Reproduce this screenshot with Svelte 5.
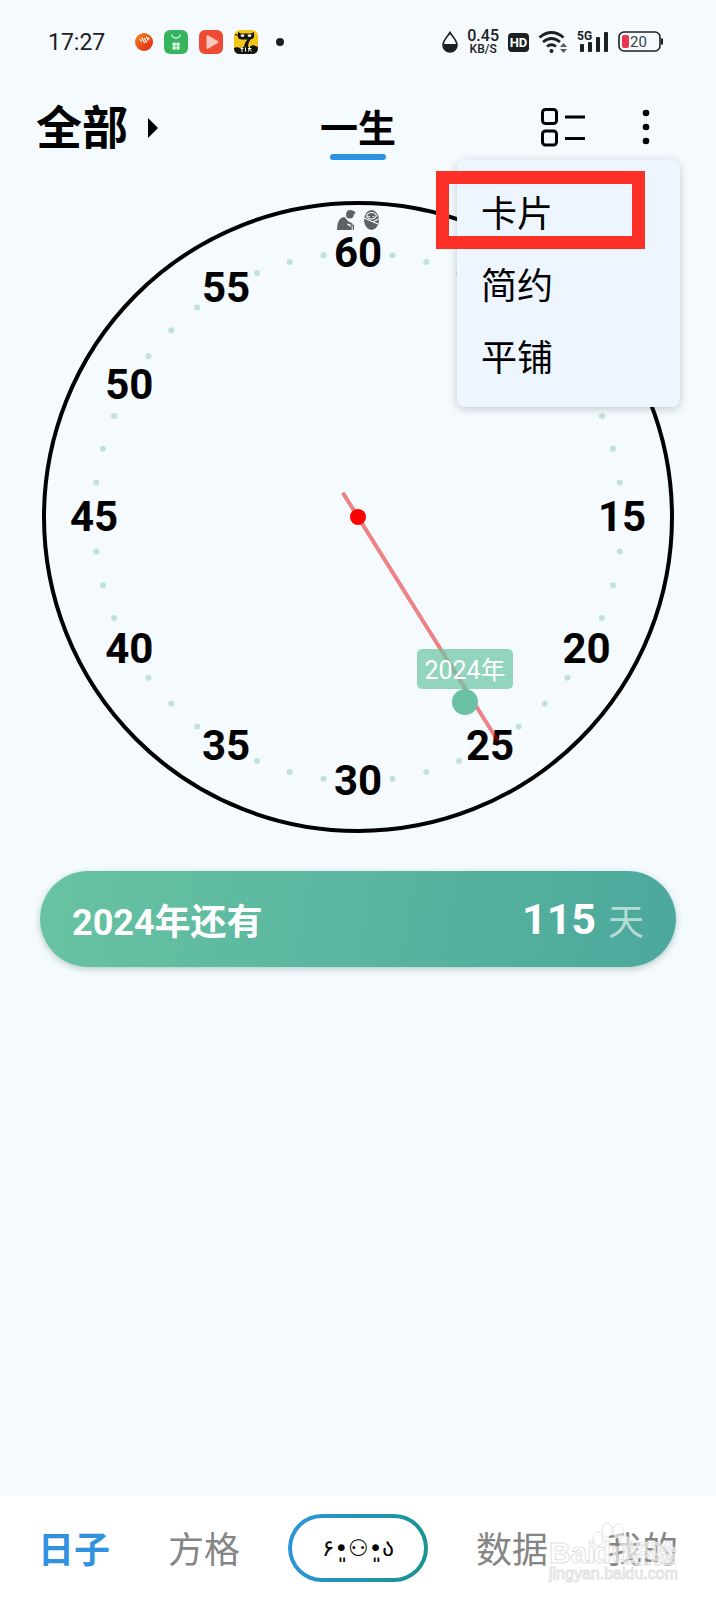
<script lang="ts">
  const CENTER = 316;
  const RING = 264;

  // angle in degrees, 0 points up, clockwise
  function polar(angle: number, radius: number) {
    const rad = (angle * Math.PI) / 180;
    return {
      x: CENTER + radius * Math.sin(rad),
      y: CENTER - radius * Math.cos(rad),
    };
  }

  const numbers = Array.from({ length: 12 }, (_, i) => ({
    label: (i + 1) * 5,
    ...polar((i + 1) * 30, RING),
  }));
  const dots = Array.from({ length: 48 }, (_, i) => i)
    .filter((i) => i % 4 !== 0)
    .map((i) => polar(i * 7.5, RING));

  const handTail = polar(328, 27);
  const handTip = polar(148, 262);

  const views = ['卡片', '简约', '平铺'];
  let selectedView = $state('卡片');
  let menuOpen = $state(true);

  const leftTabs = ['日子', '方格'];
  const rightTabs = ['数据', '我的'];
  let selectedTab = $state('日子');

  function pickView(view: string) {
    selectedView = view;
    menuOpen = false;
  }
</script>

{#snippet tabButton(tab: string)}
  <button
    class="tab"
    data-selected={selectedTab === tab}
    onclick={() => (selectedTab = tab)}
  >
    {tab}
  </button>
{/snippet}

<div class="screen">
  <div class="status-bar">
    <div class="status-left">
      <span class="time">17:27</span>
      <div class="apps">
        <svg width="18" height="18" viewBox="0 0 18 18">
          <defs>
            <linearGradient id="orange" x1="0" y1="0" x2="1" y2="1">
              <stop offset="0" stop-color="#f58a1c" />
              <stop offset="1" stop-color="#dd1f16" />
            </linearGradient>
          </defs>
          <circle cx="9" cy="9" r="9" fill="url(#orange)" />
          <path
            d="M5 6.500l1.500 2M7 5l2.500 4.500M9.500 5.500l2 3.500M11.500 4l1.500 3M13.500 5l.5 1"
            fill="none"
            stroke="#fff"
            stroke-width="1.200"
            stroke-linecap="round"
          />
        </svg>
        <svg width="24" height="24" viewBox="0 0 24 24">
          <rect width="24" height="24" rx="6" fill="#35b35d" />
          <path d="M8 4.500a4 3.600 0 0 0 8 0" fill="none" stroke="#d5f3dd" stroke-width="1.500" />
          <g fill="#d5f3dd">
            <circle cx="10.200" cy="14.200" r="1.900" />
            <circle cx="14" cy="14.200" r="1.900" />
            <circle cx="10.200" cy="18" r="1.900" />
            <circle cx="14" cy="18" r="1.900" />
          </g>
        </svg>
        <svg width="24" height="24" viewBox="0 0 24 24">
          <rect width="24" height="24" rx="6" fill="#ee4a34" />
          <path d="M7.500 6.500q0-2 1.800-1l9.500 5.500q1.200 1 0 2l-9.500 5.500q-1.800 1-1.800-1z" fill="#ffc9bd" />
        </svg>
        <svg width="24" height="24" viewBox="0 0 24 24">
          <rect width="24" height="24" rx="6" fill="#f5c518" />
          <!-- black cat over the yellow tile -->
          <path
            d="M4 2l3 1.500h10l3-1.500v5q-1 2-3.500 2.500c-2 2.500-2.500 5-2.500 8h-4c0-3 1.500-6 3.500-8h-6q-3 0-3.500-2.500zM1 4l4 1-1 1-3-1z"
            fill="#14140c"
          />
          <path d="M0 18l3-1 3 1 3-1h6l4-2 5 2v1q0 6-6 6h-12q-6 0-6-6z" fill="#14140c" />
          <path d="M6.500 4.500q0 2.500 2 2.500t2-2.500zM13.500 4.500q0 2.500 2 2.500t2-2.500z" fill="#fff" />
          <path d="M6.500 18.500h3M8 17v5M11.500 17.500v4M14 18.500h3.500M15.500 17l-1 4.500M15.500 19l2 2.500" stroke="#fff" />
        </svg>
      </div>
      <span class="more-dot"></span>
    </div>

    <div class="status-right">
      <svg width="16" height="22" viewBox="0 0 16 22">
        <path
          d="M8 1.500C6 5 1 9 1 14a7 7 0 0 0 14 0C15 9 10 5 8 1.500z"
          fill="none"
          stroke="#1b2024"
          stroke-width="1.600"
        />
        <path d="M1 13h14v1a7 7 0 0 1-14 0z" fill="#1b2024" />
      </svg>
      <div class="speed">
        <span class="speed-value">0.45</span>
        <span class="speed-unit">KB/S</span>
      </div>
      <span class="hd">HD</span>
      <svg width="30" height="24" viewBox="0 0 30 24" fill="none" stroke="#1b2024">
        <path d="M1.500 7.500q12-10 24 0M5 12q8.500-7 17 0M9 16.500q4.500-3.500 9 0" stroke-width="2.800" />
        <circle cx="13.500" cy="21" r="2" fill="#1b2024" stroke="none" />
        <path d="M22 17l3.500-4 3.500 4zM22 19l3.500 4 3.500-4z" fill="#555b60" stroke="none" />
      </svg>
      <svg width="32" height="24" viewBox="0 0 32 24" fill="#1b2024">
        <text class="network" x="0" y="10">5G</text>
        <rect x="3" y="14" width="4" height="8" rx="1" />
        <rect x="11" y="12" width="4" height="10" rx="1" />
        <rect x="19" y="7" width="4" height="15" rx="1" />
        <rect x="27" y="2" width="4" height="20" rx="1" />
      </svg>
      <svg width="46" height="22" viewBox="0 0 46 22">
        <rect x="1" y="1" width="41" height="19" rx="5" fill="none" stroke="#1b2024" stroke-width="1.600" />
        <rect x="4" y="4" width="7" height="13" rx="2" fill="#e8384f" />
        <path d="M44 7.500v6" stroke="#1b2024" stroke-width="2" />
        <text class="battery" x="12" y="16">20</text>
      </svg>
    </div>
  </div>

  <header>
    <button class="filter">
      全部
      <svg width="10" height="20" viewBox="0 0 10 20"><path d="M0 0l10 10L0 20z" /></svg>
    </button>
    <h1>一生</h1>
    <div class="actions">
      <button aria-label="切换视图">
        <svg width="46" height="40" viewBox="0 0 46 40" fill="none" stroke="#000" stroke-width="3">
          <rect x="2.500" y="1.500" width="14" height="14" rx="3" />
          <rect x="2.500" y="23" width="14" height="14" rx="3" />
          <path d="M25 9h20M25 30.500h20" />
        </svg>
      </button>
      <button aria-label="更多" onclick={() => (menuOpen = !menuOpen)}>
        <svg width="8" height="38" viewBox="0 0 8 38">
          <circle cx="4" cy="4" r="3.300" />
          <circle cx="4" cy="18" r="3.300" />
          <circle cx="4" cy="32" r="3.300" />
        </svg>
      </button>

      {#if menuOpen}
        <div class="menu">
          {#each views as view}
            <button class="menu-item" onclick={() => pickView(view)}>{view}</button>
          {/each}
          {#if selectedView === '卡片'}
            <div class="highlight"></div>
          {/if}
        </div>
      {/if}
    </div>
  </header>

  <main>
    <svg class="dial" viewBox="0 0 632 632">
      <circle cx={CENTER} cy={CENTER} r="314" fill="none" stroke="#000" stroke-width="4" />
      {#each dots as dot}
        <circle cx={dot.x} cy={dot.y} r="3" fill="#c0e2d8" />
      {/each}
      {#each numbers as { label, x, y }}
        <text class="number" {x} y={y + 14}>{label}</text>
      {/each}

      <!-- old man -->
      <g transform="translate(295 9)" fill="#5d6163">
        <path d="M9 5q0-5 4.500-5l3.500 1 2 2.500-2 .3q0 4.700-4 4.700t-4-3.500z" />
        <path d="M0 20q0-8 3.500-11.500 2-2 4-1.500l4 4.500 4 2-.5 1.500-5-1.500v1l3.500 2.500v3zM13.500 20v-4.500q1.500-1.500 3.500-.5v5h-1.300v-4q-.5-.5-1 0v4z" />
      </g>
      <!-- baby -->
      <g transform="translate(321 9)">
        <ellipse cx="8.500" cy="10" rx="7.500" ry="10" fill="#5d6163" />
        <path d="M3.500 6q1-3.500 5-3.500t5 3.500q-2 3-5 3t-5-3zM1 8l14 6M15.500 9l-5 2.500" fill="none" stroke="#f4fafd" stroke-width="1.200" />
        <path d="M5.500 6.500h1.500M9.500 6.500h1.500" stroke="#f4fafd" />
      </g>

      <line
        x1={handTail.x}
        y1={handTail.y}
        x2={handTip.x}
        y2={handTip.y}
        stroke="#e60000"
        stroke-opacity="0.480"
        stroke-width="4"
        stroke-linecap="round"
      />
      <circle cx={CENTER} cy={CENTER} r="8" fill="#ff0000" />

      <rect x="375" y="448" width="96" height="40" rx="5" fill="#6cc5a4" fill-opacity="0.720" />
      <text class="marker" x="423" y="478">2024年</text>
      <circle cx="423" cy="501" r="13" fill="#6ac1a3" />
    </svg>

    <section class="countdown">
      <span class="countdown-title">2024年还有</span>
      <span class="days">115</span>
      <span class="unit">天</span>
    </section>
  </main>

  <nav>
    <div class="tab-group">
      {#each leftTabs as tab}
        {@render tabButton(tab)}
      {/each}
    </div>
    <button class="face">۶•͈⚇•͈ა</button>
    <div class="tab-group">
      {#each rightTabs as tab}
        {@render tabButton(tab)}
      {/each}
    </div>

    <svg class="watermark" width="132" height="64" viewBox="0 0 132 64">
      <g fill="#fff" fill-opacity="0.600" stroke="#e2e2e2">
        <text class="brand" x="1" y="41">Bai</text>
        <text class="brand" x="45" y="41">du</text>
        <text class="brand-cjk" x="78" y="41">经验</text>
        <ellipse cx="50" cy="17" rx="5" ry="7" />
        <ellipse cx="59" cy="8" rx="5" ry="7" />
        <ellipse cx="70" cy="9" rx="5" ry="7" />
        <ellipse cx="77" cy="20" rx="5" ry="6" />
        <text class="site" x="1" y="57">jingyan.baidu.com</text>
      </g>
    </svg>
  </nav>
</div>

<style>
  :global(body) {
    margin: 0;
  }

  .screen {
    display: flex;
    flex-direction: column;
    min-height: 100vh;
    background: #f4fafd;
    color: #000;
    font-family: Roboto, 'Noto Sans CJK SC', sans-serif;
  }

  button {
    padding: 0;
    border: 0;
    background: none;
    color: inherit;
    font: inherit;
    cursor: pointer;
  }

  svg {
    display: block;
  }

  .status-bar {
    display: flex;
    align-items: center;
    justify-content: space-between;
    height: 84px;
    padding: 0 52px 0 48px;
    color: #1b2024;
  }
  .status-left,
  .status-right,
  .apps {
    display: flex;
    align-items: center;
  }
  .status-right {
    gap: 9px;
  }
  .apps {
    gap: 11px;
    margin: 0 18px 0 30px;
  }
  .time {
    font-size: 23px;
  }
  .more-dot {
    width: 8px;
    height: 8px;
    border-radius: 50%;
    background: #1b2024;
  }
  .speed {
    display: flex;
    flex-direction: column;
    align-items: center;
    font-weight: 500;
  }
  .speed-value {
    font-size: 16px;
    line-height: 14px;
  }
  .speed-unit {
    font-size: 12px;
    line-height: 12px;
  }
  .hd {
    width: 21px;
    border-radius: 4px;
    background: #1b2024;
    color: #fff;
    font-size: 13px;
    font-weight: 700;
    line-height: 19px;
    text-align: center;
  }
  .network {
    font-size: 12px;
    font-weight: 700;
  }
  .battery {
    fill: #3a3f43;
    font-size: 15px;
  }

  header {
    display: grid;
    grid-template-columns: 1fr auto 1fr;
    align-items: center;
    height: 88px;
    padding: 0 36px;
  }
  .filter {
    display: flex;
    align-items: center;
    gap: 20px;
    font-size: 46px;
    font-weight: 700;
    line-height: 56px;
  }
  h1 {
    margin: 0;
    padding-top: 8px;
    font-size: 38px;
    font-weight: 700;
    line-height: 50px;
  }
  h1::after {
    content: '';
    display: block;
    width: 56px;
    height: 6px;
    margin: 0 auto;
    border-radius: 3px;
    background: #2b92e4;
  }
  .actions {
    position: relative;
    display: flex;
    align-items: center;
    justify-content: flex-end;
    gap: 56px;
    padding-right: 30px;
  }

  .menu {
    position: absolute;
    top: 52px;
    right: 0;
    z-index: 1;
    width: 223px;
    box-sizing: border-box;
    padding: 19px 0 12px;
    border-radius: 8px;
    background: #edf5fe;
    box-shadow: 0 2px 8px rgba(40, 60, 90, 0.25);
  }
  .menu-item {
    display: block;
    width: 100%;
    padding-left: 24px;
    font-size: 36px;
    line-height: 72px;
    text-align: left;
  }
  .highlight {
    position: absolute;
    top: 11px;
    left: -21px;
    width: 209px;
    height: 78px;
    box-sizing: border-box;
    border: 13px solid #fd3028;
    pointer-events: none;
  }

  main {
    flex: 1;
    padding: 29px 40px;
  }
  .dial {
    width: calc(100% - 4px);
    margin: 0 auto 38px;
  }
  .number {
    font-size: 42px;
    font-weight: 700;
    text-anchor: middle;
  }
  .marker {
    fill: #fff;
    font-size: 25px;
    text-anchor: middle;
  }

  .countdown {
    display: flex;
    align-items: center;
    height: 96px;
    padding: 0 32px;
    border-radius: 48px;
    background: linear-gradient(100deg, #68c3a2, #4ba89c);
    box-shadow: 0 2px 6px rgba(40, 90, 80, 0.3);
    color: #fff;
  }
  .countdown-title {
    flex: 1;
    font-size: 36px;
    font-weight: 700;
  }
  .days {
    margin-right: 12px;
    font-size: 43px;
    font-weight: 700;
  }
  .unit {
    color: rgba(255, 255, 255, 0.6);
    font-size: 36px;
  }

  nav {
    position: relative;
    display: grid;
    grid-template-columns: 1fr 140px 1fr;
    align-items: center;
    gap: 48px;
    height: 104px;
    padding: 0 38px;
    background: #fff;
  }
  .tab-group {
    display: flex;
    justify-content: space-between;
    padding-top: 6px;
  }
  .tab {
    color: #858585;
    font-size: 36px;
    line-height: 48px;
  }
  .tab[data-selected='true'] {
    color: #3193e0;
    font-weight: 700;
  }
  .face {
    height: 68px;
    border: 4px solid transparent;
    border-radius: 34px;
    background:
      linear-gradient(#fff, #fff) padding-box,
      linear-gradient(110deg, #2f93e0, #17948a) border-box;
    font-family: 'DejaVu Sans', sans-serif;
    font-size: 23px;
  }

  .watermark {
    position: absolute;
    right: 36px;
    bottom: 14px;
    pointer-events: none;
  }
  .brand {
    font-family: 'Liberation Sans', sans-serif;
    font-size: 30px;
    font-weight: 700;
  }
  .brand-cjk {
    font-size: 25px;
    font-weight: 700;
  }
  .site {
    font-family: 'Liberation Sans', sans-serif;
    font-size: 16px;
  }
</style>
